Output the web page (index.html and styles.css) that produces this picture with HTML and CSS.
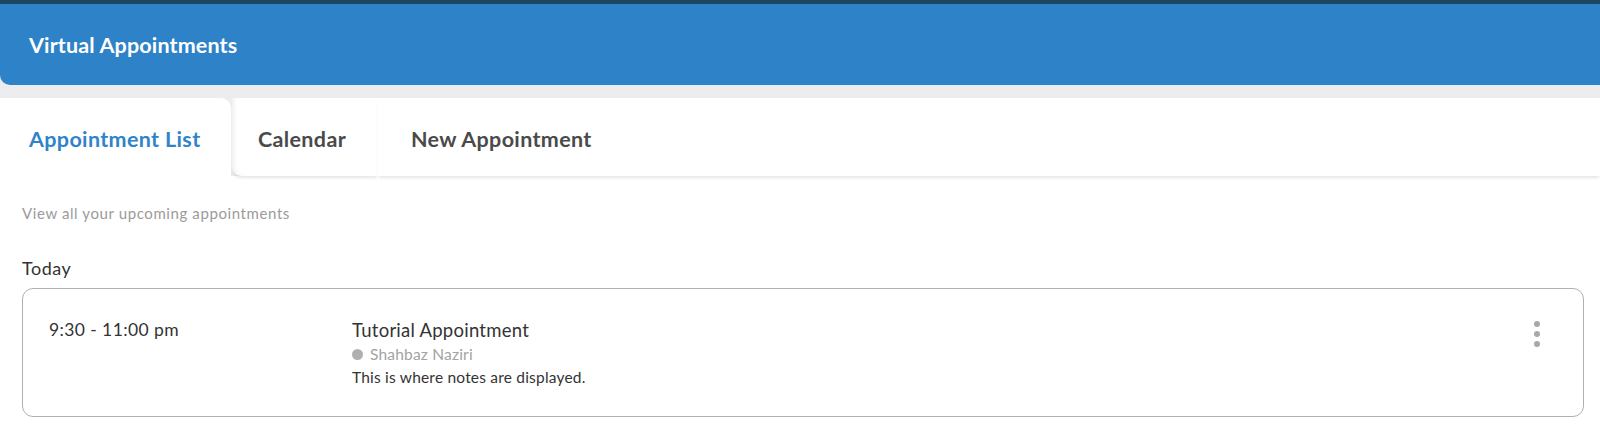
FILE: index.html
```html
<!DOCTYPE html>
<html>
<head>
<meta charset="utf-8">
<link rel="stylesheet" href="styles.css">
</head>
<body>
<div class="page">
  <div class="top">
    <div class="topline"></div>
    <header class="header"><h1 class="title">Virtual Appointments</h1></header>
  </div>
  <nav class="tabs">
    <div class="tab active">Appointment List</div>
    <div class="tab tab-cal">Calendar</div>
    <div class="tab tab-new">New Appointment</div>
  </nav>
  <main class="content">
    <p class="subtitle">View all your upcoming appointments</p>
    <h2 class="day">Today</h2>
    <div class="card">
      <div class="time">9:30 - 11:00 pm</div>
      <div class="details">
        <div class="appt-title">Tutorial Appointment</div>
        <div class="person"><span class="dot"></span>Shahbaz Naziri</div>
        <div class="notes">This is where notes are displayed.</div>
      </div>
      <div class="kebab"><span></span><span></span><span></span></div>
    </div>
  </main>
</div>
</body>
</html>
```
FILE: styles.css
```css
* { box-sizing: border-box; }
html, body { margin: 0; padding: 0; background: #fff; }
body { font-family: Lato, "Noto Sans", sans-serif; color: #333; }

.page { width: 1600px; height: 445px; overflow: hidden; background: #fff; }

.top {
  background: linear-gradient(#e4e4e6, #ececee 40%, #ededef);
  padding-bottom: 13px;
}
.topline { height: 4px; background: #1d4562; }

.header {
  height: 81px;
  background: #2d82c8;
  border-bottom-left-radius: 10px;
  display: flex;
  align-items: center;
  padding-left: 29px;
}
.title {
  margin: 0;
  color: #fff;
  font-size: 21.5px;
  font-weight: 700;
  letter-spacing: 0.15px;
}

.tabs {
  display: flex;
  height: 78px;
  background: #ededef;
}
.tab {
  background: #fff;
  display: flex;
  align-items: center;
  font-size: 21.5px;
  font-weight: 700;
  color: #4a4a4a;
  height: 78px;
  letter-spacing: 0.35px;
  box-shadow: 0 3px 3px -1px rgba(0,0,0,0.10);
  padding-top: 4px;
}
.tab.active {
  width: 231px;
  padding-left: 29px;
  color: #2f84c9;
  border-top-right-radius: 10px;
  height: 80px;
  padding-top: 2px;
  box-shadow: none;
  position: relative;
  z-index: 2;
}
.tab-cal {
  width: 147px;
  padding-left: 27px;
  border-bottom-left-radius: 10px;
  box-shadow: inset 6px 0 6px -5px rgba(0,0,0,0.12), 0 3px 3px -1px rgba(0,0,0,0.10);
}
.tab-new {
  padding-left: 33px;
  flex: 1;
}

.content { padding: 0 16px 0 22px; }
.subtitle {
  margin: 27px 0 0;
  font-size: 15px;
  letter-spacing: 0.6px;
  color: #9b9b9b;
  line-height: 20px;
}
.day {
  margin: 34px 0 0;
  font-size: 18px;
  letter-spacing: 0.5px;
  font-weight: 400;
  color: #333;
  line-height: 22px;
}
.card {
  margin-top: 9px;
  height: 129px;
  border: 1px solid #b0b0b0;
  border-radius: 11px;
  display: flex;
  padding: 29px 0 0 26px;
}
.time {
  width: 303px;
  font-size: 17.5px;
  letter-spacing: 0.4px;
  color: #333;
  line-height: 24px;
}
.details { flex: 1; }
.appt-title { font-size: 18.5px; letter-spacing: 0.25px; line-height: 24px; color: #333; }
.person {
  display: flex;
  align-items: center;
  font-size: 15.5px;
  letter-spacing: 0.2px;
  color: #a3a3a3;
  line-height: 24px;
}
.dot {
  width: 11px; height: 11px; border-radius: 50%;
  background: #b0b0b0;
  margin-right: 7px;
}
.notes { font-size: 15.5px; letter-spacing: 0.2px; line-height: 22px; color: #333; }

.kebab {
  width: 6px;
  margin: 3px 43px 0 0;
  display: flex;
  flex-direction: column;
  gap: 4px;
}
.kebab span { width: 6px; height: 6px; border-radius: 50%; background: #a8a8a8; }
```
